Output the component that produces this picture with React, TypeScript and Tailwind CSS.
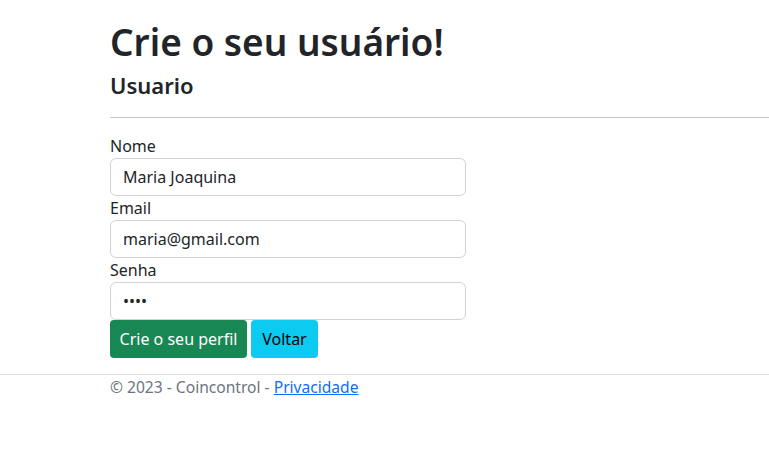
export default function App() {
    return (
        <div className="min-h-screen bg-white text-[#212529] font-['Segoe_UI','Noto_Sans',sans-serif] text-[16px] leading-[24px]">
            <main className="pl-[110px] pt-[20px] pb-[16px]">
                <h1 className="text-[37px] leading-[44px] font-semibold mb-[8px]">Crie o seu usuário!</h1>
                <h4 className="text-[22px] leading-[26px] font-semibold mb-[8px]">Usuario</h4>
                <hr className="mt-[19px] mb-[16px] border-0 border-t border-[#c6c8ca]" />
                <form className="w-[356px]" onSubmit={e => e.preventDefault()}>
                    <label className="block">Nome</label>
                    <input
                        className="block w-full h-[38px] px-[12px] border border-[#ced4da] rounded-[6px] outline-none"
                        defaultValue="Maria Joaquina"
                    />
                    <label className="block">Email</label>
                    <input
                        className="block w-full h-[38px] px-[12px] border border-[#ced4da] rounded-[6px] outline-none"
                        defaultValue="maria@gmail.com"
                    />
                    <label className="block">Senha</label>
                    <input
                        type="password"
                        className="block w-full h-[38px] px-[12px] border border-[#ced4da] rounded-[6px] outline-none"
                        defaultValue="1234"
                    />
                    <div className="flex gap-[4px]">
                        <button className="h-[38px] w-[137px] rounded-[4px] bg-[#198754] text-white">Crie o seu perfil</button>
                        <button className="h-[38px] w-[67px] rounded-[4px] bg-[#0dcaf0] text-black">Voltar</button>
                    </div>
                </form>
            </main>
            <footer className="border-t border-[#dee2e6] pl-[110px] text-[#6c757d] text-[15.6px]">
                © 2023 - Coincontrol - <a href="#" className="text-[#0d6efd] underline">Privacidade</a>
            </footer>
        </div>
    )
}
